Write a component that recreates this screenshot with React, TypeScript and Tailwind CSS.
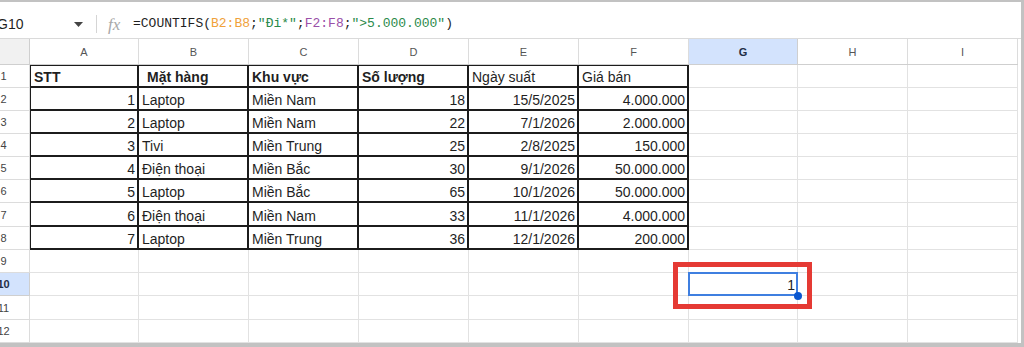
import React from "react";

const COLS = ["A", "B", "C", "D", "E", "F", "G", "H", "I"];

const GRID =
  "grid grid-cols-[52px_109px_110px_110px_110px_110px_110px_109px_110px_110px]";

const ROW_H = [
  "h-[23px]",
  "h-[23px]",
  "h-[23px]",
  "h-[23px]",
  "h-[23px]",
  "h-[23px]",
  "h-[24px]",
  "h-[23px]",
  "h-[23px]",
  "h-[23px]",
  "h-[24px]",
  "h-[23px]",
];

type Cell = { v: string; right?: boolean; bold?: boolean; indent?: boolean };

const header: Cell[] = [
  { v: "STT", bold: true },
  { v: "Mặt hàng", bold: true, indent: true },
  { v: "Khu vực", bold: true },
  { v: "Số lượng", bold: true },
  { v: "Ngày suất" },
  { v: "Giá bán" },
];

const data: string[][] = [
  ["1", "Laptop", "Miền Nam", "18", "15/5/2025", "4.000.000"],
  ["2", "Laptop", "Miền Nam", "22", "7/1/2026", "2.000.000"],
  ["3", "Tivi", "Miền Trung", "25", "2/8/2025", "150.000"],
  ["4", "Điện thoại", "Miền Bắc", "30", "9/1/2026", "50.000.000"],
  ["5", "Laptop", "Miền Bắc", "65", "10/1/2026", "50.000.000"],
  ["6", "Điện thoại", "Miền Nam", "33", "11/1/2026", "4.000.000"],
  ["7", "Laptop", "Miền Trung", "36", "12/1/2026", "200.000"],
];

const rightCols = [0, 3, 4, 5];

function rowCells(r: number): Cell[] {
  if (r === 0) return header;
  if (r <= 7)
    return data[r - 1].map((v, i) => ({ v, right: rightCols.includes(i) }));
  return [];
}

function FormulaBar() {
  return (
    <div className="flex h-[37px] items-center border-b border-[#dadada] pt-[8px] ml-[-22px]">
      <div className="flex w-[118px] items-center pl-[19px] text-[14px] text-[#1f1f1f]">
        G10
      </div>
      <svg width="9" height="5" viewBox="0 0 9 5" className="ml-[-22px]">
        <path d="M0 0h9L4.5 5z" fill="#444" />
      </svg>
      <div className="ml-[13px] h-[18px] w-px bg-[#d5d5d5]" />
      <span className="ml-[11px] w-[25px] font-['Liberation_Serif'] text-[17px] italic leading-none text-[#a8a8a8]">
        fx
      </span>
      <div className="font-['Liberation_Mono'] text-[13px] text-[#1f1f1f]">
        =COUNTIFS(
        <span className="text-[#f0a13a]">B2:B8</span>;
        <span className="text-[#2b8a4a]">"Đi*"</span>;
        <span className="text-[#9a4fa8]">F2:F8</span>;
        <span className="text-[#2b8a4a]">"&gt;5.000.000"</span>)
      </div>
    </div>
  );
}

function ColumnHeader() {
  return (
    <div className={`${GRID} h-[26px] border-b border-[#cfcfcf]`}>
      <div className="border-r border-[#cfcfcf] bg-[#f1f1f1]" />
      {COLS.map((c) => (
        <div
          key={c}
          className={
            c === "G"
              ? "flex items-center justify-center border-r border-[#cfcfcf] bg-[#d3e3fd] pt-[1px] text-[11px] font-bold text-[#1f2d45]"
              : "flex items-center justify-center border-r border-[#dcdcdc] bg-white pt-[1px] text-[11px] text-[#555]"
          }
        >
          {c}
        </div>
      ))}
    </div>
  );
}

function Row({ r }: { r: number }) {
  const cells = rowCells(r);
  const inTable = r <= 7;
  return (
    <div className={`${GRID} ${ROW_H[r]}`}>
      <div
        className={
          r === 9
            ? "flex items-center justify-center border-r border-b border-[#cfcfcf] bg-[#d3e3fd] pt-[1px] text-[11px] font-bold text-[#1f2d45]"
            : "flex items-center justify-center border-r border-b border-[#dcdcdc] bg-white pt-[1px] text-[11px] text-[#444]"
        }
      >
        {r + 1}
      </div>
      {COLS.map((c, i) => {
        const cell = cells[i];
        if (inTable && i < 6) {
          return (
            <div
              key={c}
              className={[
                "flex items-end overflow-hidden whitespace-nowrap border-r-2 border-b-2 border-[#1c1c1c] text-[14px] leading-[17px] text-[#1f1f1f]",
                i === 0 ? "border-l" : "",
                r === 0 ? "border-t" : "",
                cell.right ? "justify-end pr-[2px]" : "pl-[3px]",
                cell.bold ? "font-bold" : "",
                cell.indent ? "pl-[8px]" : "",
              ].join(" ")}
            >
              {cell.v}
            </div>
          );
        }
        if (r === 9 && c === "G") {
          return (
            <div key={c} className="relative border-r border-b border-[#e2e2e2]">
              <div className="absolute -top-px -left-px right-[-1px] bottom-[-1px] flex items-end justify-end border-2 border-[#3f7fe0] pr-[1px] text-[14px] leading-[17px] text-[#1f1f1f]">
                1
              </div>
              <div className="absolute right-[-5px] bottom-[-5px] h-[8px] w-[8px] rounded-full bg-[#0b57d0]" />
              <div className="absolute top-[-11px] left-[-16px] h-[47px] w-[139px] border-[5px] border-[#e53a34]" />
            </div>
          );
        }
        return <div key={c} className="border-r border-b border-[#e2e2e2]" />;
      })}
    </div>
  );
}

export default function App() {
  return (
    <div className="box-border h-[347px] w-[1024px] overflow-hidden border-t-2 border-r-[3px] border-b-4 border-[#c2c2c2] bg-white font-['Liberation_Sans',Arial,sans-serif]">
      <FormulaBar />
      <div className="ml-[-22px] w-[1040px]">
        <ColumnHeader />
        {ROW_H.map((_, r) => (
          <Row key={r} r={r} />
        ))}
      </div>
    </div>
  );
}
